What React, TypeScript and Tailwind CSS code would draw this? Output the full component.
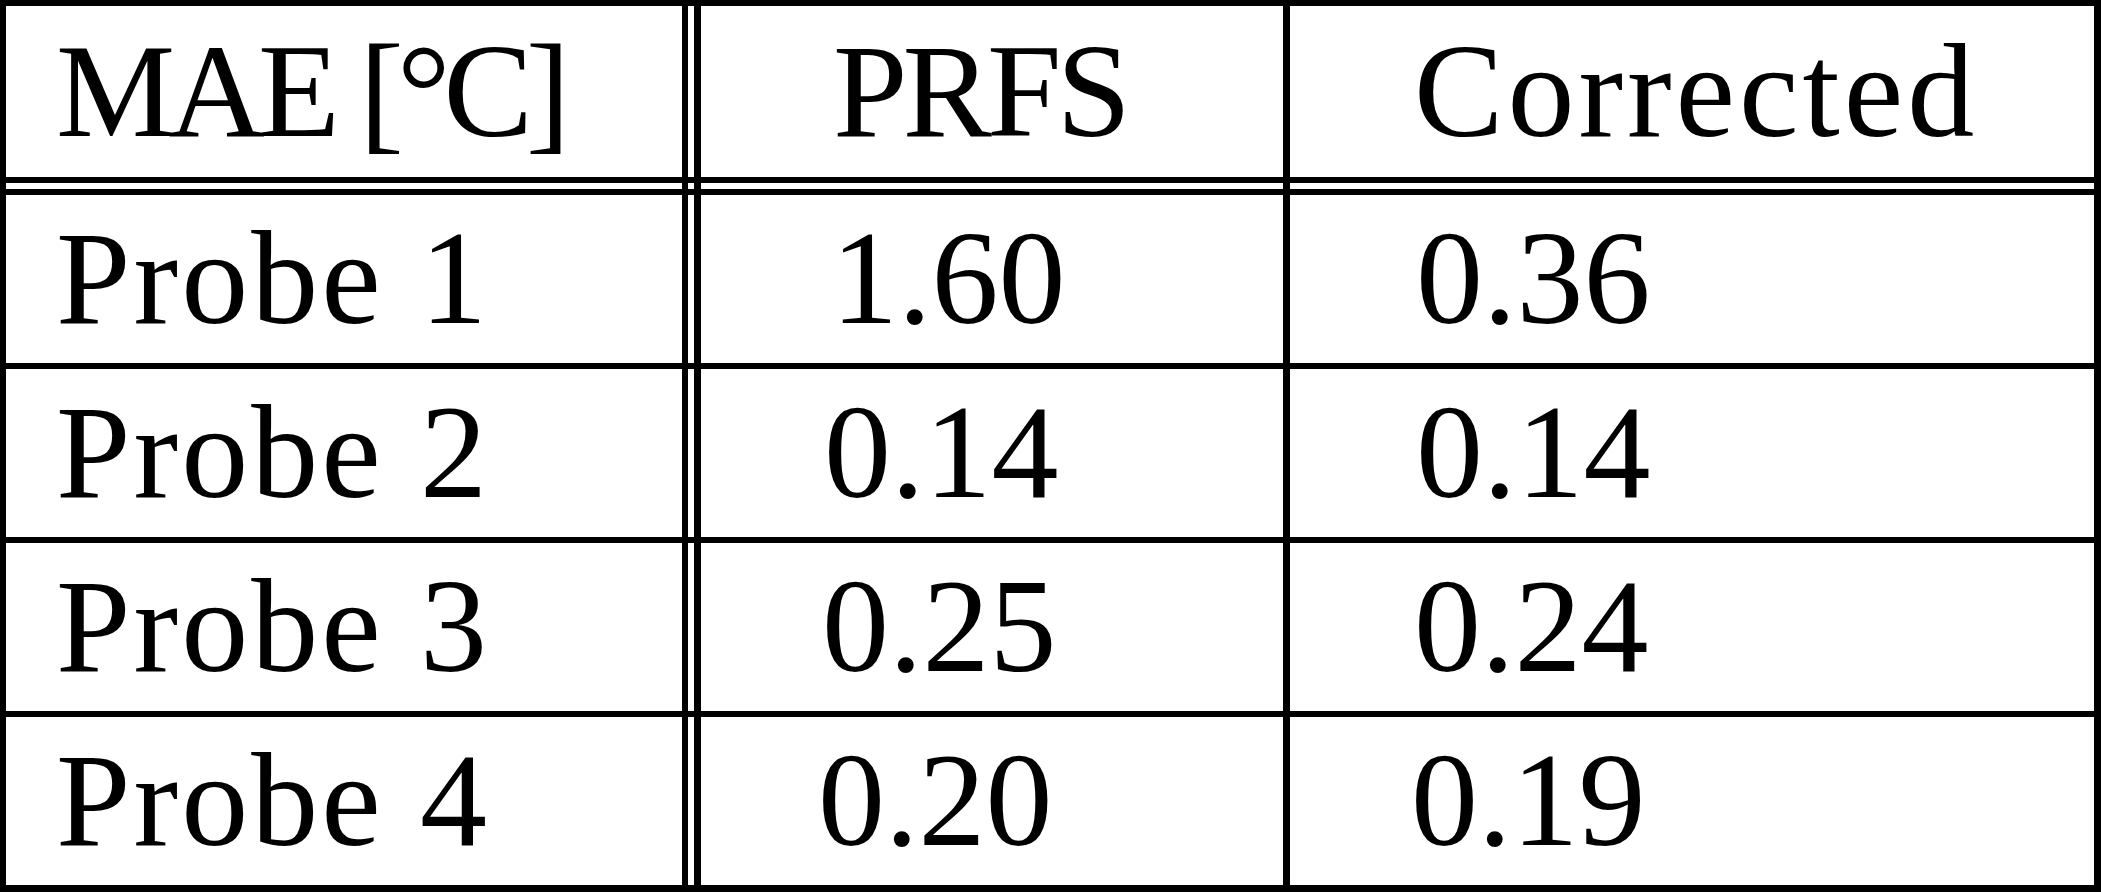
const rows = [
  { name: 'Probe 1', prfs: '1.60', corr: '0.36', pad2: 'pl-[130px]', pad3: 'pl-[126px]' },
  { name: 'Probe 2', prfs: '0.14', corr: '0.14', pad2: 'pl-[123px]', pad3: 'pl-[126px]' },
  { name: 'Probe 3', prfs: '0.25', corr: '0.24', pad2: 'pl-[121px]', pad3: 'pl-[124px]' },
  { name: 'Probe 4', prfs: '0.20', corr: '0.19', pad2: 'pl-[117px]', pad3: 'pl-[121px]' },
]

function Row({
  height,
  children,
}: {
  height: string
  children?: React.ReactNode
}) {
  return <div className={`flex bg-black ${height}`}>{children}</div>
}

export default function App() {
  return (
    <main className="w-[2101px] h-[892px] bg-white">
      <div className="flex flex-col bg-black pt-[6px] pl-[6px] pr-[7px] pb-[7px] font-['Liberation_Serif',serif] text-[134px] text-black">
        <Row height="h-[171px] leading-[171px]">
          <div className="w-[676px] bg-white pl-[50px] tracking-[-7px]">MAE [°C]</div>
          <div className="ml-[6px] w-[6px] bg-white" />
          <div className="ml-[7px] w-[582px] bg-white pl-[132px] tracking-[-5px]">PRFS</div>
          <div className="ml-[7px] w-[804px] bg-white pl-[124px] tracking-[4px]">Corrected</div>
        </Row>

        <div className="mt-[6px]">
          <Row height="h-[6px]">
            <div className="w-[676px] bg-white" />
            <div className="ml-[6px] w-[6px] bg-white" />
            <div className="ml-[7px] w-[582px] bg-white" />
            <div className="ml-[7px] w-[804px] bg-white" />
          </Row>
        </div>

        <div className="mt-[6px] flex flex-col gap-[6px]">
          {rows.map((r) => (
            <Row key={r.name} height="h-[168px] leading-[166px]">
              <div className="w-[676px] bg-white pl-[50px] tracking-[3px]">{r.name}</div>
              <div className="ml-[6px] w-[6px] bg-white" />
              <div className={`ml-[7px] w-[582px] bg-white ${r.pad2}`}>{r.prfs}</div>
              <div className={`ml-[7px] w-[804px] bg-white ${r.pad3}`}>{r.corr}</div>
            </Row>
          ))}
        </div>
      </div>
    </main>
  )
}
